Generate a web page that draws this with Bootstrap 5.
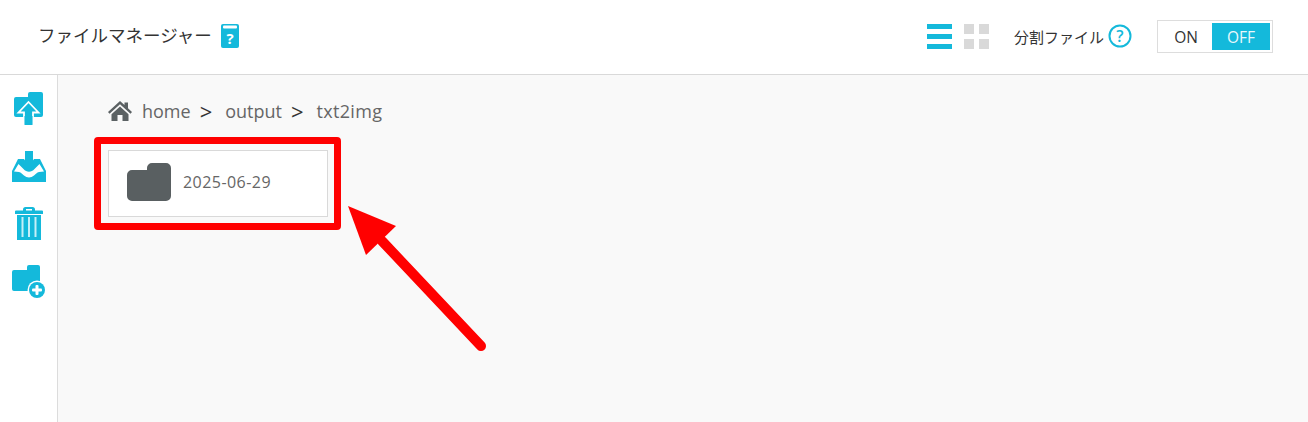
<!DOCTYPE html>
<html lang="ja">
<head>
    <meta charset="UTF-8">
    <meta name="viewport" content="width=device-width, initial-scale=1.0">
    <title>ファイルマネージャー</title>
    <link href="https://cdn.jsdelivr.net/npm/bootstrap@5.3.0/dist/css/bootstrap.min.css" rel="stylesheet">
    <style>
        html, body { height: 100%; }
        body {
            font-family: "Open Sans", "Noto Sans CJK JP", sans-serif;
            color: #333;
            background: #fff;
            overflow: hidden;
        }
        .fm-header {
            height: 75px;
            border-bottom: 1px solid #d9d9d9;
            padding: 0 35px 2px 38px;
        }
        .fm-title { font-size: 17.500px; margin-top: -2px; }
        .fm-split { font-size: 15px; margin: 0 25px 0 25px; }
        .fm-split span { margin-top: 2px; }
        .fm-body { height: 347px; }
        .fm-side {
            width: 58px;
            border-right: 1px solid #dcdcdc;
            padding-top: 17px;
            gap: 25px;
        }
        .fm-side svg { display: block; }
        .fm-upload { margin-bottom: 1px; }
        .fm-main {
            background: #f9f9f9;
            padding: 23px 0 0 50px;
        }
        .fm-crumbs { color: #666; font-size: 18px; line-height: 26px; height: 26px; }
        .fm-crumbs .fm-sep { color: #333; font-size: 22px; margin: 0 13px 0 9px; }
        .fm-home { margin: 0 9px 0 -1px; }
        .fm-last { letter-spacing: 0.3px; }
        .fm-folder {
            width: 220px;
            height: 67px;
            margin-top: 26px;
            background: #fff;
            border: 1px solid #d9d9d9;
            padding: 0 0 3px 18px;
            color: #666;
            font-size: 16px;
        }
        .fm-folder span { margin-left: 12px; letter-spacing: 0.45px; }
        .fm-gap { margin-left: 12px; }
        .fm-switch {
            width: 116px;
            height: 33px;
            border: 1px solid #ddd;
            padding: 2px;
            font-size: 15.500px;
        }
        .fm-switch div { flex: 1; text-align: center; line-height: 28px; }
        .fm-switch .fm-on { background: #14b9db; color: #e9f8fb; flex: 0 0 58px; }
        .fm-mark {
            position: absolute;
            left: 94px;
            top: 137px;
            width: 247px;
            height: 93px;
            border: 7px solid #f00;
            border-radius: 4px;
        }
        .fm-arrow { position: absolute; left: 340px; top: 200px; }
    </style>
</head>
<body>
    <header class="fm-header d-flex align-items-center">
        <div class="fm-title">ファイルマネージャー</div>
        <svg class="ms-2" width="20" height="24" viewBox="0 0 20 24">
            <path d="M3 0h14a2 2 0 0 1 2 2v20a2 2 0 0 1-2 2H3a2 2 0 0 1-2-2V2a2 2 0 0 1 2-2z" fill="#14b9db"/>
            <rect x="3" y="1.500" width="14" height="3" rx="1" fill="#fff"/>
            <text x="10" y="20" font-size="15" font-weight="700" text-anchor="middle" fill="#fff" font-family="Open Sans">?</text>
        </svg>
        <div class="ms-auto d-flex align-items-center">
            <svg width="25" height="25" viewBox="0 0 25 25" fill="#14b9db">
                <rect y="0" width="25" height="5"/>
                <rect y="10" width="25" height="5"/>
                <rect y="20" width="25" height="5"/>
            </svg>
            <svg class="fm-gap" width="25" height="25" viewBox="0 0 25 25" fill="#d9d9d9">
                <rect width="10" height="10"/>
                <rect x="15" width="10" height="10"/>
                <rect y="15" width="10" height="10"/>
                <rect x="15" y="15" width="10" height="10"/>
            </svg>
            <div class="fm-split d-flex align-items-center"><span>分割ファイル</span>
                <svg class="ms-1" width="24" height="24" viewBox="0 0 24 24">
                    <circle cx="12" cy="12" r="10.500" fill="none" stroke="#14b9db" stroke-width="2"/>
                    <text x="12" y="18" font-size="16" font-weight="600" text-anchor="middle" fill="#14b9db" font-family="Open Sans">?</text>
                </svg>
            </div>
            <div class="fm-switch d-flex">
                <div>ON</div>
                <div class="fm-on">OFF</div>
            </div>
        </div>
    </header>

    <div class="fm-body d-flex">
        <nav class="fm-side d-flex flex-column align-items-center flex-shrink-0">
            <!-- upload -->
            <svg class="fm-upload" width="29" height="33" viewBox="0 0 29 33">
                <path d="M2 5h12V2a2 2 0 0 1 2-2h11a2 2 0 0 1 2 2v21a2 2 0 0 1-2 2H2a2 2 0 0 1-2-2V7a2 2 0 0 1 2-2z" fill="#14b9db"/>
                <path d="M14.500 10 24.500 20.500h-5.500V33h-9V20.500H4.500z" fill="#14b9db" stroke="#fff" stroke-width="1.800"/>
                <rect x="10.500" y="24" width="8" height="9" fill="#14b9db"/>
            </svg>
            <!-- download tray -->
            <svg width="34" height="31" viewBox="0 0 34 31">
                <path d="M6 8h6l5 7 5-7h6l6 12v11H0V20z" fill="#14b9db"/>
                <path d="M2 20.500 6.500 13l5 5c3 3.500 8 3.500 11 0l5-5 4.500 7.500-5 .5c-2 .5-3.500 2-5 3.500-3 2.500-7 2.500-10 0-1.500-1.500-3-3-5-3.500z" fill="#fff"/>
                <path d="M13 0h8v10h5.500L17 20 7.500 10H13z" fill="#14b9db"/>
            </svg>
            <!-- trash -->
            <svg width="28" height="33" viewBox="0 0 28 33">
                <path d="M8 3.500V2.500A2.500 2.500 0 0 1 10.500 0h7A2.500 2.500 0 0 1 20 2.500v1h7a1 1 0 0 1 1 1V7H0V4.500a1 1 0 0 1 1-1z" fill="#14b9db"/>
                <rect x="11" y="2" width="6" height="1.500" fill="#fff"/>
                <path d="M2 8h24v25H2z" fill="#14b9db"/>
                <rect x="6.500" y="10" width="2" height="20" fill="#c4eff8"/>
                <rect x="13" y="10" width="2" height="20" fill="#c4eff8"/>
                <rect x="19.500" y="10" width="2" height="20" fill="#c4eff8"/>
            </svg>
            <!-- new folder -->
            <svg width="34" height="34" viewBox="0 0 34 34">
                <path d="M2 5h13V2a2 2 0 0 1 2-2h9a2 2 0 0 1 2 2v22a2 2 0 0 1-2 2H2a2 2 0 0 1-2-2V7a2 2 0 0 1 2-2z" fill="#14b9db"/>
                <circle cx="25" cy="25" r="9.500" fill="#fff"/>
                <circle cx="25" cy="25" r="8" fill="#14b9db"/>
                <rect x="20" y="23.500" width="10" height="3" rx="1" fill="#fff"/>
                <rect x="23.500" y="20" width="3" height="10" rx="1" fill="#fff"/>
            </svg>
        </nav>

        <main class="fm-main flex-grow-1">
            <div class="fm-crumbs d-flex align-items-center">
                <svg class="fm-home" width="26" height="22" viewBox="0 0 26 22" fill="#5b6163">
                    <path d="M13 1 1 12l1.500 1.700L13 4.200l10.500 9.500L25 12l-4-3.700V2.500h-3.500v2.600z"/>
                    <path d="M4.500 14.200 13 6.500l8.500 7.700V21h-6v-6h-5v6h-6z"/>
                </svg>
                <span>home</span><span class="fm-sep">&gt;</span><span>output</span><span class="fm-sep">&gt;</span><span class="fm-last">txt2img</span>
            </div>
            <div class="fm-folder d-flex align-items-center">
                <svg width="44" height="38" viewBox="0 0 44 38">
                    <path d="M5 7h15V5a5 5 0 0 1 5-5h14a5 5 0 0 1 5 5v28a5 5 0 0 1-5 5H5a5 5 0 0 1-5-5V12a5 5 0 0 1 5-5z" fill="#595f61"/>
                </svg>
                <span>2025-06-29</span>
            </div>
        </main>
    </div>

    <div class="fm-mark"></div>
    <svg class="fm-arrow" width="150" height="155" viewBox="340 200 150 155">
        <path d="M348 206 396 226 366 255z" fill="#f00"/>
        <path d="M382 241 481 346" stroke="#f00" stroke-width="10" stroke-linecap="round" fill="none"/>
    </svg>
</body>
</html>
